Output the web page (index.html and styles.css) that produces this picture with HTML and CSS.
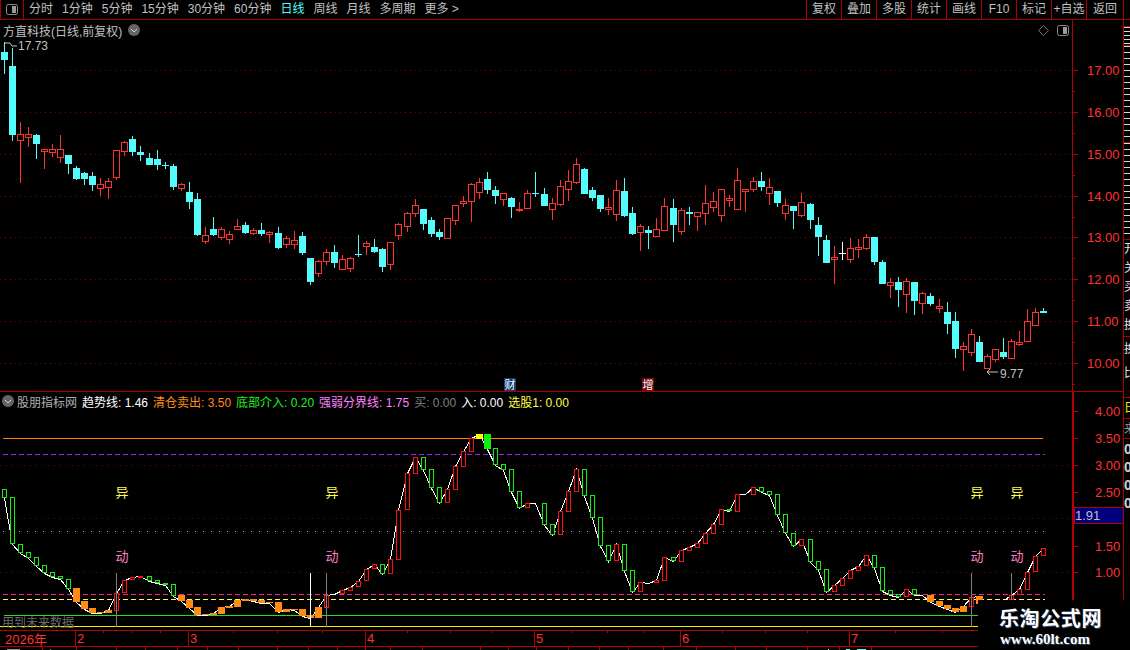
FILE: index.html
```html
<!DOCTYPE html>
<html lang="zh-CN">
<head>
  <meta charset="UTF-8">
  <title>方直科技 日线</title>
  <link rel="stylesheet" href="styles.css">
</head>
<body>
  <div class="app">
    <div class="toolbar">
      <div class="layout-cell">
        <svg class="panel-icon" viewBox="0 0 12 11"><rect x="0.5" y="0.5" width="11" height="10" rx="2"/><rect class="panel-fill" x="6" y="2" width="4" height="7"/></svg>
      </div>
      <div class="periods">
        <span>分时</span><span>1分钟</span><span>5分钟</span><span>15分钟</span><span>30分钟</span><span>60分钟</span>
        <span class="active">日线</span><span>周线</span><span>月线</span><span>多周期</span><span>更多 &gt;</span>
      </div>
      <div class="actions">
        <span>复权</span><span>叠加</span><span>多股</span><span>统计</span><span>画线</span><span>F10</span><span>标记</span><span>+自选</span><span>返回</span>
      </div>
    </div>

    <div class="workspace">
      <div class="charts">
        <div class="pane main-pane">
          <div class="plot">
            <div class="pane-title">
              <span class="stock-name">方直科技(日线,前复权)</span>
              <svg class="chevron" viewBox="0 0 12 12"><circle cx="6" cy="6" r="6"/><polyline points="3,5 6,8 9,5"/></svg>
              <span class="title-icons">
                <svg class="diamond" viewBox="0 0 11 11"><path d="M5.5 0.5 L10.5 5.5 L5.5 10.5 L0.5 5.5 Z"/></svg>
                <svg class="panel-icon" viewBox="0 0 12 11"><rect x="0.5" y="0.5" width="11" height="10" rx="2"/><rect class="panel-fill" x="6" y="2" width="4" height="7"/></svg>
              </span>
            </div>
            <svg id="candles" class="chart" width="1072" height="351" viewBox="0 40 1072 351"></svg>
          </div>
          <svg id="price-axis" class="axis" width="50" height="371" viewBox="1073 20 50 371"></svg>
        </div>

        <div class="pane sub-pane">
          <div class="plot">
            <div class="pane-title sub-title">
              <svg class="chevron" viewBox="0 0 12 12"><circle cx="6" cy="6" r="6"/><polyline points="3,5 6,8 9,5"/></svg>
              <span class="formula-name">股朋指标网</span>
              <span class="c-white">趋势线: 1.46</span>
              <span class="c-orange">清仓卖出: 3.50</span>
              <span class="c-green">底部介入: 0.20</span>
              <span class="c-pink">强弱分界线: 1.75</span>
              <span class="c-gray">买: 0.00</span>
              <span class="c-white">入: 0.00</span>
              <span class="c-yellow">选股1: 0.00</span>
            </div>
            <svg id="indicator" class="chart" width="1072" height="220" viewBox="0 410 1072 220"></svg>
          </div>
          <svg id="indicator-axis" class="axis axis-thick" width="49" height="238" viewBox="1074 392 49 238"></svg>
        </div>

        <svg id="time-axis" class="time-axis" width="1123" height="20" viewBox="0 630 1123 20"></svg>
      </div>

      <div class="strip">
        <div class="strip-cell cell-a"></div>
        <div class="strip-cell cell-b"></div>
        <div class="strip-cell cell-c"></div>
        <div class="strip-cell cell-c"></div>
        <div class="strip-cell cell-d">开关买卖换</div>
        <div class="strip-cell cell-e">换比</div>
        <div class="strip-cell cell-f">日</div>
        <div class="strip-cell cell-g">来</div>
        <div class="strip-cell cell-h">0000</div>
      </div>
    </div>

    <div class="watermark">
      <div class="wm-name">乐淘公式网</div>
      <div class="wm-url">www.60lt.com</div>
    </div>
  </div>
  <script src="chart.js"></script>
</body>
</html>
```

FILE: styles.css
```css
* {
  box-sizing: border-box;
}
body {
  margin: 0;
  background: #000;
  font-family: "Liberation Sans", "Noto Sans CJK SC", sans-serif;
  font-size: 12px;
  color: #c0c0c0;
  overflow: hidden;
}
.app {
  position: relative;
  width: 1130px;
  height: 650px;
  overflow: hidden;
}

/* top bar */
.toolbar {
  display: flex;
  height: 20px;
  border-bottom: 1px solid #a80000;
  line-height: 19px;
}
.layout-cell {
  display: flex;
  align-items: center;
  justify-content: center;
  width: 24px;
  border-left: 1px solid #a80000;
  border-right: 1px solid #a80000;
}
.panel-icon {
  width: 12px;
  height: 11px;
}
.panel-icon rect {
  fill: none;
  stroke: #8c8c8c;
}
.panel-icon .panel-fill {
  fill: #9a9a9a;
  stroke: none;
}
.periods {
  display: flex;
  gap: 9px;
  padding-left: 5px;
  white-space: nowrap;
}
.periods .active {
  color: #54fcfc;
}
.actions {
  display: flex;
  margin-left: auto;
  margin-right: 6px;
}
.actions span {
  width: 35px;
  border-left: 1px solid #a80000;
  text-align: center;
  white-space: nowrap;
}
.actions span:last-child {
  width: 38px;
  border-right: 1px solid #a80000;
}

/* chart area */
.workspace {
  display: flex;
  height: 630px;
}
.charts {
  width: 1123px;
}
.pane {
  display: flex;
}
.main-pane {
  height: 371px;
}
.sub-pane {
  height: 239px;
  border-top: 1px solid #a80000;
}
.plot {
  width: 1072px;
}
.pane-title {
  display: flex;
  align-items: center;
  height: 20px;
  padding-left: 3px;
  white-space: nowrap;
}
.sub-title {
  height: 18px;
  padding-left: 2px;
  gap: 5px;
}
.chevron {
  width: 12px;
  height: 12px;
}
.chevron circle {
  fill: #666;
}
.chevron polyline {
  fill: none;
  stroke: #d0d0d0;
}
.stock-name {
  margin-right: 6px;
}
.formula-name {
  margin-left: -2px;
  color: #b0b0b0;
}
.title-icons {
  display: flex;
  align-items: center;
  gap: 8px;
  margin-left: auto;
  margin-right: 3px;
}
.diamond {
  width: 11px;
  height: 11px;
}
.diamond path {
  fill: none;
  stroke: #707070;
}
.c-white { color: #fff; }
.c-orange { color: #ff8a14; }
.c-green { color: #20f020; }
.c-pink { color: #ff80ff; }
.c-gray { color: #808080; }
.c-yellow { color: #ffff40; }

.chart,
.axis,
.time-axis {
  display: block;
}
.axis {
  box-shadow: -1px 0 0 #b40000;
  margin-left: 1px;
}
.axis-thick {
  box-shadow: -2px 0 0 #b40000;
  margin-left: 2px;
}
.axis-label {
  font-size: 13px;
  fill: #ff3232;
}
.axis-current {
  font-size: 13px;
  fill: #c0c0c0;
}
.price-note {
  font-size: 12px;
  fill: #c0c0c0;
}
.signal {
  font-size: 13px;
  text-anchor: middle;
}
.signal-rise { fill: #ffff40; }
.signal-move { fill: #ff80c0; }
.future-note {
  font-size: 12px;
  fill: #6c6c6c;
}
.event-tag {
  font-size: 11px;
  fill: #fff;
  text-anchor: middle;
}
.date-label {
  font-size: 13px;
  fill: #ff3232;
}

/* clipped list at the right edge */
.strip {
  width: 7px;
  border-left: 1px solid #a80000;
  overflow: hidden;
  color: #e0e0e0;
}
.strip-cell {
  border-bottom: 1px solid #a80000;
  overflow: hidden;
  line-height: 12px;
  word-break: break-all;
}
.cell-a { height: 7px; }
.cell-b {
  height: 19px;
  background: repeating-linear-gradient(#d8d8d8 0 1px, #000 1px 4px);
}
.cell-c {
  height: 97px;
  background: repeating-linear-gradient(#d8d8d8 0 1px, #000 1px 6px);
}
.cell-d { height: 97px; line-height: 19px; }
.cell-e { height: 61px; line-height: 24px; }
.cell-f { height: 21px; line-height: 20px; color: #f0f000; }
.cell-g { height: 20px; line-height: 20px; color: #a0a0a0; }
.cell-h {
  border: 0;
  padding-top: 1px;
  line-height: 18px;
  font-size: 14px;
  font-weight: bold;
  color: #d0d0d0;
}

/* watermark over the corner */
.watermark {
  position: absolute;
  right: 0;
  bottom: 0;
  width: 152px;
  height: 50px;
  padding-top: 7px;
  padding-left: 21px;
  background: #000;
  color: #fff;
  text-shadow: 1px 1px 0 #2b4468;
}
.wm-name {
  font-size: 20px;
  line-height: 24px;
  font-weight: bold;
  letter-spacing: 0.6px;
  white-space: nowrap;
}
.wm-url {
  margin-top: 1px;
  padding-left: 1px;
  font-family: "Liberation Serif", serif;
  font-size: 15px;
  line-height: 15px;
  font-weight: bold;
  white-space: nowrap;
}
```

FILE: chart.js
```javascript
// daily bars, values are pixel rows: type, body top, body bottom, wick top, wick bottom
const candles = [
  ['c',52,60,42,74],['c',66,135,48,141],['r',134,140,122,183],['r',134,137,127,147],['c',135,144,134,159],
  ['r',149,151,149,169],['r',149,152,144,157],['r',149,157,135,163],['c',155,164,155,174],['c',168,179,166,180],
  ['c',173,179,172,185],['c',176,185,172,191],['r',184,188,178,196],['r',181,187,178,199],['r',150,177,150,180],
  ['r',142,151,141,156],['c',139,152,136,156],['c',152,155,146,161],['c',158,165,153,165],['c',159,165,150,170],
  ['c',165,166,162,169],['c',166,187,164,190],['r',184,188,183,191],['c',192,202,182,209],['c',199,235,193,236],
  ['r',235,241,227,244],['c',229,235,217,236],['r',229,237,227,240],['r',234,239,231,244],['r',226,229,219,230],
  ['c',225,233,222,234],['r',230,233,228,235],['c',230,234,223,236],['r',232,234,231,243],['c',233,248,227,249],
  ['r',238,244,236,248],['r',240,244,231,249],['c',236,253,232,255],['c',258,282,258,285],['r',261,273,260,277],
  ['r',252,261,249,265],['c',252,263,245,268],['r',259,269,255,270],['r',258,268,257,272],['c',254,255,235,257],
  ['r',243,246,241,255],['c',247,252,239,253],['c',249,267,248,272],['r',242,264,242,270],['r',224,235,223,240],
  ['r',213,226,212,232],['r',205,213,199,217],['c',209,224,209,230],['c',220,234,217,237],['c',232,237,229,240],
  ['r',218,238,218,238],['r',205,220,205,225],['r',201,203,196,207],['r',184,201,183,222],['r',182,192,178,199],
  ['c',179,190,172,194],['c',190,196,186,204],['r',193,199,193,206],['c',198,207,197,218],['r',209,210,202,212],
  ['r',193,208,190,209],['c',193,194,172,197],['c',194,206,188,206],['r',203,209,198,220],['r',186,204,180,206],
  ['r',181,189,170,201],['r',164,182,158,184],['c',169,194,168,194],['c',190,198,187,201],['c',195,209,195,212],
  ['r',207,209,198,215],['r',190,214,180,221],['c',191,216,178,217],['c',213,234,207,235],['r',226,232,224,251],
  ['c',230,233,226,249],['r',229,236,218,237],['r',206,230,198,230],['c',208,225,199,242],['r',210,231,208,235],
  ['c',212,214,207,225],['r',212,216,212,231],['r',203,213,185,225],['r',201,207,192,212],['r',189,215,189,222],
  ['r',198,200,195,207],['r',180,209,168,209],['r',189,191,189,212],['r',181,189,177,192],['c',181,187,172,191],
  ['r',187,193,178,205],['c',191,203,191,207],['r',205,213,199,220],['c',206,211,206,229],['r',202,215,193,217],
  ['c',204,220,203,229],['c',225,237,217,256],['c',240,263,235,263],['r',257,259,246,284],['w',253,254,242,260],
  ['r',248,259,238,263],['r',247,249,239,258],['r',237,248,234,250],['c',237,262,237,265],['c',262,284,260,284],
  ['r',282,285,278,298],['c',282,290,277,307],['r',281,294,278,313],['c',282,301,282,315],['r',293,303,292,314],
  ['c',296,304,293,306],['r',306,308,299,313],['c',312,324,302,334],['c',321,349,312,358],['r',346,349,342,371],
  ['r',334,352,329,356],['c',342,362,336,362],['r',356,368,354,369],['r',349,359,349,362],['c',352,357,338,359],
  ['r',341,358,339,358],['r',342,344,331,346],['r',321,341,309,341],['r',312,325,308,325],['c',311,313,308,313]
];

// indicator bars: r up, g down, o / O orange down / up, y and G solid peak bars; top, bottom
const bars = [
  ['g',489,498],['g',497,544],['g',544,553],['g',552,558],['g',557,566],['g',565,573],['g',572,577],['g',576,579],
  ['g',579,589],['o',588,602],['o',601,609],['o',608,613],['o',612,613],['O',610,613],['r',593,611],['r',580,593],
  ['r',577,580],['r',576,578],['g',576,581],['g',580,583],['g',583,585],['g',584,596],['o',595,601],['o',600,608],
  ['o',607,615],['o',614,615],['O',613,615],['O',607,614],['O',606,608],['O',600,607],['O',599,601],['o',599,601],
  ['o',600,603],['o',602,603],['o',602,612],['O',609,612],['o',609,610],['o',609,616],['o',615,618],['O',607,618],
  ['r',595,608],['r',594,595],['r',590,594],['r',587,591],['r',581,587],['r',569,581],['r',564,569],['g',564,574],
  ['r',559,574],['r',510,560],['r',473,510],['r',457,474],['g',457,470],['g',469,488],['g',487,503],['r',489,503],
  ['r',466,490],['r',451,467],['r',438,452],['y',434,439],['G',434,449],['g',448,465],['g',464,470],['g',469,492],
  ['g',491,508],['r',503,508],['r',503,504],['g',503,525],['g',524,535],['r',511,535],['r',491,512],['r',469,492],
  ['g',469,496],['g',495,518],['g',517,546],['g',545,561],['r',544,561],['g',544,571],['g',570,592],['r',582,592],
  ['g',582,583],['r',580,583],['r',557,581],['g',557,561],['r',550,562],['r',547,551],['r',543,548],['r',533,544],
  ['r',524,534],['r',509,525],['g',509,511],['r',494,512],['r',494,495],['r',487,495],['g',487,492],['g',491,495],
  ['g',494,515],['g',514,533],['g',533,546],['r',539,546],['g',539,562],['g',561,570],['g',569,592],['r',585,592],
  ['r',578,586],['r',570,579],['r',566,571],['r',555,566],['g',555,568],['g',567,591],['g',590,595],['g',594,597],
  ['r',589,597],['g',589,595],['r',595,596],['o',595,602],['o',601,606],['o',605,609],['o',608,612],['O',606,612],
  ['r',597,607],['O',596,604],['g',602,606],['g',606,610],['r',600,610],['r',595,600],['r',589,595],['r',572,590],
  ['r',556,572],['r',548,556]
];

const red = '#ff3232';
const cyan = '#54fcfc';
const lineRed = '#b40000';

// bars sit 8px apart with an extra pixel every 16 or 17 bars
function barX(i) {
  return 4 + 8 * i + [18, 34, 50, 67, 83, 100, 116].filter(n => i >= n).length;
}

function hLine(y, x1, x2, color, dash) {
  const d = dash ? ` stroke-dasharray="${dash}"` : '';
  return `<line x1="${x1}" y1="${y + 0.5}" x2="${x2}" y2="${y + 0.5}" stroke="${color}"${d} shape-rendering="crispEdges"/>`;
}

function vLine(x, y1, y2, color) {
  return `<line x1="${x + 0.5}" y1="${y1}" x2="${x + 0.5}" y2="${y2}" stroke="${color}" shape-rendering="crispEdges"/>`;
}

// half is the distance from the centre column to the outer edge column
function body(x, top, bottom, stroke, half) {
  return `<rect x="${x - half + 0.5}" y="${top + 0.5}" width="${half * 2}" height="${bottom - top}" fill="#000" stroke="${stroke}" shape-rendering="crispEdges"/>`;
}

function solid(x, top, bottom, fill) {
  return `<rect x="${x - 3}" y="${top}" width="7" height="${bottom - top}" fill="${fill}" shape-rendering="crispEdges"/>`;
}

function text(cls, x, y, value) {
  return `<text class="${cls}" x="${x}" y="${y}">${value}</text>`;
}

function drawCandles() {
  let out = '';
  [70, 112, 154, 196, 237, 279, 321, 363].forEach(y => {
    out += hLine(y, 0, 1072, '#7d0000', '1 4');
  });
  candles.forEach((c, i) => {
    const x = barX(i);
    const color = c[0] === 'c' ? cyan : c[0] === 'w' ? '#fff' : red;
    out += vLine(x, c[3], c[4], color);
    out += c[0] === 'r' ? body(x, c[1], c[2], red, 3) : solid(x, c[1], c[2], color);
  });
  // highest and lowest price notes
  out += '<polyline points="4,46 5,43 10,43 12,46 17,46" fill="none" stroke="#c0c0c0"/>';
  out += text('price-note', 18, 50, '17.73');
  out += '<polyline points="990,369 987,372 990,375 987,372 998,372" fill="none" stroke="#c0c0c0"/>';
  out += text('price-note', 1000, 378, '9.77');
  // event tags
  out += '<rect x="504" y="378" width="12" height="13" fill="#123c70"/>';
  out += text('event-tag', 510, 389, '财');
  out += '<rect x="642" y="378" width="12" height="13" fill="#6e0c0c"/>';
  out += text('event-tag', 648, 389, '增');
  document.getElementById('candles').innerHTML = out;
}

function closeOf(b) {
  return b[0] === 'g' || b[0] === 'o' || b[0] === 'G' ? b[2] : b[1];
}

function drawIndicator() {
  let out = '';
  [465, 518, 572].forEach(y => {
    out += hLine(y, 0, 1072, '#7d0000', '1 5');
  });
  out += hLine(438, 3, 1043, '#ff8000');
  out += hLine(454, 3, 1045, '#a020f0', '5 3');
  out += hLine(531, 3, 1044, '#ff80ff', '1 7');
  out += hLine(594, 3, 1045, '#ff2080', '5 3');
  out += hLine(599, 3, 1045, '#ffff40', '5 3');
  out += hLine(615, 4, 1072, '#20e020');
  out += hLine(626, 0, 1072, '#f0f000');

  const points = bars.map((b, i) => `${barX(i) + 0.5},${closeOf(b) + 0.5}`).join(' ');
  out += `<polyline points="${points}" fill="none" stroke="#fff" shape-rendering="crispEdges"/>`;

  bars.forEach((b, i) => {
    const x = barX(i);
    if (b[0] === 'r') out += body(x, b[1], b[2] - 1, '#ff1010', 2);
    else if (b[0] === 'g') out += body(x, b[1], b[2] - 1, '#14ee14', 2);
    else if (b[0] === 'y') out += solid(x, b[1], b[2], '#ffff00');
    else if (b[0] === 'G') out += solid(x, b[1], b[2], '#10f010');
    else out += solid(x, b[1], b[2], '#ff8a14');
  });

  [116, 326, 971, 1011].forEach(x => {
    out += vLine(x, 573, 627, '#808080');
  });
  out += vLine(310, 573, 627, '#fff');

  [122, 332, 977, 1017].forEach(x => {
    out += text('signal signal-rise', x, 497, '异');
    out += text('signal signal-move', x, 561, '动');
  });
  out += text('future-note', 2, 627, '用到未来数据');
  document.getElementById('indicator').innerHTML = out;
}

function drawAxes() {
  let price = '';
  [[17, 70], [16, 112], [15, 154], [14, 196], [13, 237], [12, 279], [11, 321], [10, 363]].forEach(p => {
    price += hLine(p[1], 1073, 1078, lineRed);
    price += hLine(p[1] + 21, 1073, 1075, lineRed);
    price += text('axis-label', 1087, p[1] + 5, p[0] + '.00');
  });
  document.getElementById('price-axis').innerHTML = price;

  let sub = '';
  [['4.00', 411], ['3.50', 438], ['3.00', 465], ['2.50', 492], ['1.50', 546], ['1.00', 572]].forEach(p => {
    sub += hLine(p[1], 1074, 1078, lineRed);
    sub += text('axis-label', 1095, p[1] + 5, p[0]);
  });
  sub += `<rect x="1074.5" y="507.5" width="49" height="16" fill="#00007f" stroke="${lineRed}"/>`;
  sub += text('axis-current', 1075, 520, '1.91');
  document.getElementById('indicator-axis').innerHTML = sub;
}

function drawTimeAxis() {
  let out = hLine(630, 0, 1123, lineRed) + hLine(646, 0, 1123, lineRed);
  [[75, '2'], [188, '3'], [365, '4'], [534, '5'], [680, '6'], [849, '7']].forEach(m => {
    out += vLine(m[0], 630, 646, lineRed);
    out += text('date-label', m[0] + 2, 643, m[1]);
  });
  out += text('date-label', 5, 644, '2026年');
  [103, 132, 160, 233, 277, 322, 407, 450, 492, 571, 607, 644, 722, 765, 807, 895, 942].forEach(x => {
    out += vLine(x, 630, 633, lineRed);
  });
  [42, 76, 116, 145, 177, 207, 238, 277, 308, 337, 365, 390, 422, 480, 508, 536, 568, 599, 628, 663, 696, 735, 766, 807, 839, 871].forEach(x => {
    out += vLine(x, 646, 650, lineRed);
  });
  // tops of the row cut off by the window edge
  out += '<rect x="7" y="649" width="13" height="1" fill="#909090"/>';
  out += '<rect x="50" y="649" width="1" height="1" fill="#909090"/>';
  out += '<rect x="828" y="649" width="1" height="1" fill="#fff"/>';
  out += `<rect x="846" y="649" width="4" height="1" fill="${cyan}"/>`;
  out += `<rect x="857" y="649" width="9" height="1" fill="${cyan}"/>`;
  document.getElementById('time-axis').innerHTML = out;
}

drawCandles();
drawIndicator();
drawAxes();
drawTimeAxis();
```
